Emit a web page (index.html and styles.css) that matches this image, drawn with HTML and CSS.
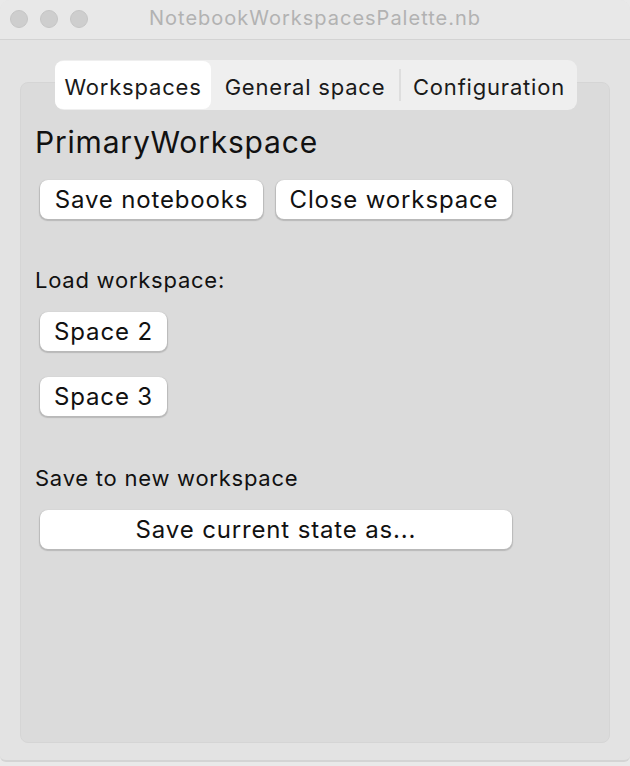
FILE: index.html
```html
<!DOCTYPE html>
<html>
<head>
<meta charset="utf-8">
<link rel="stylesheet" href="styles.css">
</head>
<body>
<div class="window">
  <div class="titlebar">
    <div class="lights">
      <span class="light"></span><span class="light"></span><span class="light"></span>
    </div>
    <div class="title">NotebookWorkspacesPalette.nb</div>
  </div>
  <div class="content">
    <div class="tabs">
      <div class="tab active">Workspaces</div>
      <div class="tab t-general">General space</div>
      <div class="sep"></div>
      <div class="tab t-config">Configuration</div>
    </div>
    <div class="panel">
      <div class="heading">PrimaryWorkspace</div>
      <div class="row">
        <button class="btn w-save">Save notebooks</button>
        <button class="btn w-close">Close workspace</button>
      </div>
      <div class="label l-load">Load workspace:</div>
      <div class="col">
        <button class="btn w-space">Space 2</button>
        <button class="btn w-space">Space 3</button>
      </div>
      <div class="label l-new">Save to new workspace</div>
      <button class="btn w-wide">Save current state as...</button>
    </div>
  </div>
</div>
</body>
</html>
```

FILE: styles.css
```css
* { box-sizing: border-box; }
html, body { margin: 0; padding: 0; }
body {
  width: 630px;
  height: 766px;
  background: #e9e9e9;
  font-family: "Inter", "Liberation Sans", sans-serif;
  color: #1a1a1a;
  overflow: hidden;
}
.window {
  width: 630px;
  height: 762px;
  background: #e3e3e3;
  border-radius: 10px 10px 6px 6px;
  display: flex;
  flex-direction: column;
  overflow: hidden;
  border-bottom: 2px solid #d4d4d4;
}
.titlebar {
  height: 40px;
  flex: none;
  background: #e8e8e8;
  border-bottom: 1px solid #d3d3d3;
  position: relative;
  display: flex;
  align-items: center;
  justify-content: center;
}
.lights {
  position: absolute;
  left: 10px;
  top: 10px;
  display: flex;
  gap: 12px;
}
.light {
  width: 18px;
  height: 18px;
  border-radius: 50%;
  background: #cecece;
  border: 1px solid #c5c5c5;
}
.title {
  font-size: 20px;
  color: #b2b2b2;
  letter-spacing: 1px;
  margin-top: -3px;
}
.content {
  flex: 1;
  padding: 21px 20px 17px 20px;
  position: relative;
  display: flex;
  flex-direction: column;
}
.tabs {
  position: absolute;
  left: 55px;
  top: 20px;
  height: 50px;
  width: 522px;
  background: #efefef;
  border-radius: 9px;
  display: flex;
  align-items: center;
  z-index: 2;
}
.tab {
  font-size: 22px;
  letter-spacing: 0.8px;
  height: 48px;
  display: flex;
  align-items: center;
  justify-content: center;
  padding-top: 3px;
  color: #1a1a1a;
  white-space: nowrap;
}
.tab.active {
  background: #ffffff;
  border-radius: 8px;
  width: 156px;
}
.t-general { width: 188px; }
.t-config { width: 176px; }
.sep {
  width: 2px;
  height: 32px;
  background: #dedede;
}
.panel {
  margin-top: 21px;
  flex: 1;
  background: #dbdbdb;
  border: 1px solid #d5d5d5;
  border-radius: 8px;
  padding: 41px 14px 0 14px;
  display: flex;
  flex-direction: column;
  align-items: flex-start;
}
.heading {
  font-size: 30px;
  line-height: 36px;
  letter-spacing: 0.8px;
  color: #111;
}
.btn {
  font-family: inherit;
  font-size: 24px;
  letter-spacing: 0.85px;
  color: #111;
  background: #ffffff;
  border: none;
  border-radius: 8px;
  height: 39px;
  padding: 0;
  box-shadow: 0 1px 1px 0.5px #b9b9b9;
  white-space: nowrap;
}
.row {
  display: flex;
  gap: 13px;
  margin-top: 20px;
  margin-left: 5px;
}
.w-save { width: 223px; }
.w-close { width: 236px; }
.label {
  font-size: 22px;
  line-height: 26px;
  letter-spacing: 0.75px;
  color: #111;
}
.l-load { margin-top: 48px; }
.col {
  display: flex;
  flex-direction: column;
  gap: 26px;
  margin-top: 19px;
  margin-left: 5px;
}
.w-space { width: 127px; }
.l-new { margin-top: 49px; }
.w-wide { width: 472px; margin-top: 19px; margin-left: 5px; }
```
